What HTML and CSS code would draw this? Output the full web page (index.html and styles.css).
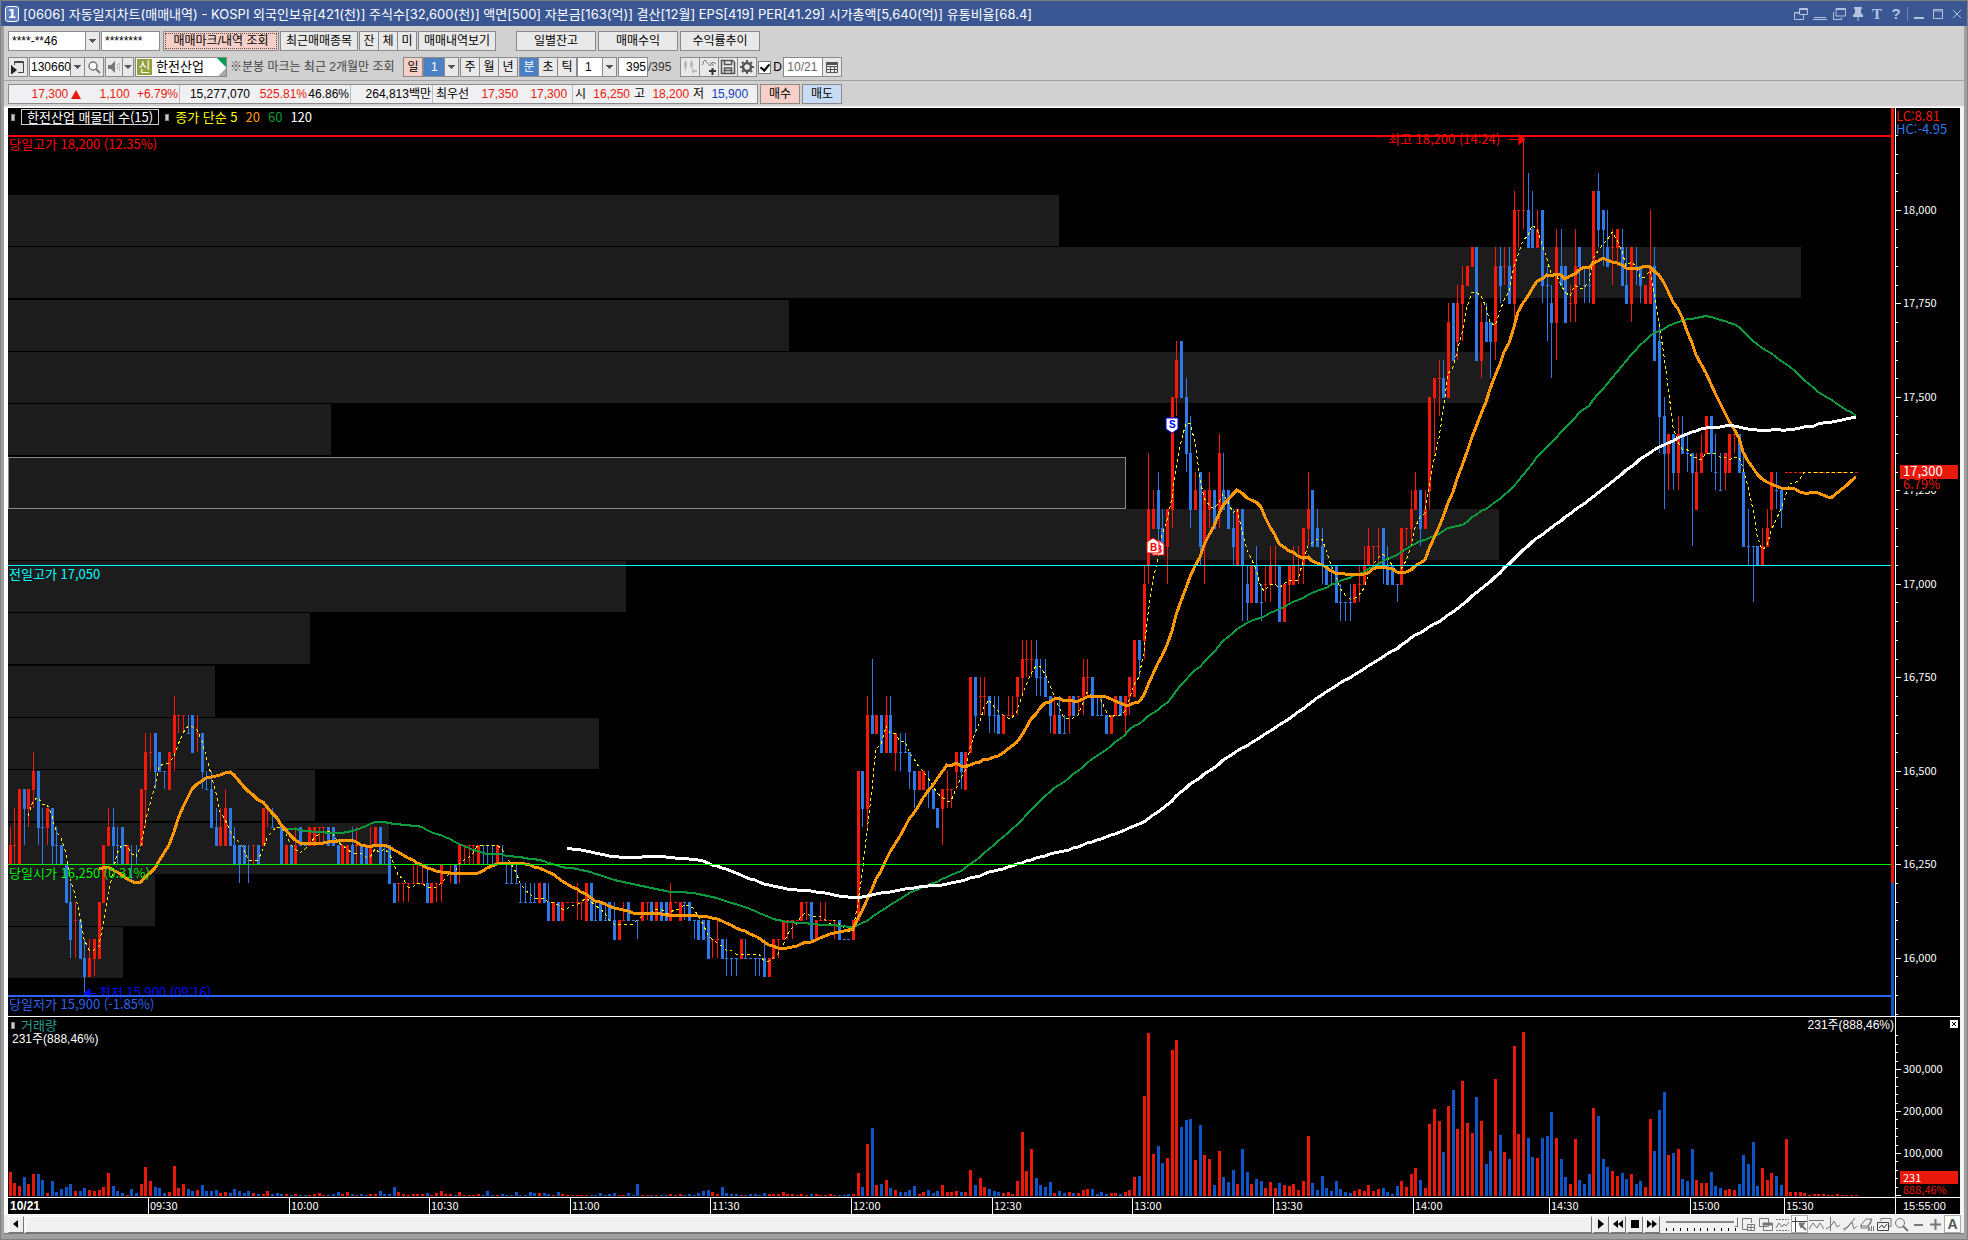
FILE: index.html
```html
<!DOCTYPE html>
<html lang="ko">
<head>
<meta charset="utf-8">
<title>[0606] 자동일지차트(매매내역)</title>
<link rel="stylesheet" href="styles.css">
</head>
<body>
<div class="window">
  <header class="titlebar">
    <span class="badge">1</span>
    <h1 class="title">[0606] 자동일지차트(매매내역) - KOSPI 외국인보유[421(천)] 주식수[32,600(천)] 액면[500] 자본금[163(억)] 결산[12월] EPS[419] PER[41.29] 시가총액[5,640(억)] 유통비율[68.4]</h1>
    <div class="winbtns">
      <button aria-label="분리"><svg width="14" height="12"><path d="M5.5 .5h8v6h-8zM5 1.5h9M9.500 7v4.500h-9v-7h4.500M0 5h5" fill="none" stroke="currentColor"/></svg></button>
      <button aria-label="접기"><svg width="14" height="12"><path d="M1 9.500h12M0 11.500h14" stroke="currentColor"/></svg></button>
      <button aria-label="겹치기"><svg width="14" height="12"><path d="M4 .5h9.500v7.500h-9.500zM4 1.500h9M1.500 4v7.500h8v-2" fill="none" stroke="currentColor"/></svg></button>
      <button aria-label="고정"><svg width="12" height="14"><path d="M2 0h8v2h-1v4l2 2v2H1V8l2-2V2H2zM5.500 10h1v4h-1z" fill="currentColor"/></svg></button>
      <button aria-label="글꼴"><b class="serif">T</b></button>
      <button aria-label="도움말"><b>?</b></button>
      <i class="vline"></i>
      <button aria-label="최소화"><svg width="12" height="12"><path d="M1 9h10v2H1z" fill="currentColor"/></svg></button>
      <button aria-label="최대화"><svg width="12" height="12"><path d="M1.500 1.500h9v9h-9zM1 3h10" fill="none" stroke="currentColor"/></svg></button>
      <button aria-label="닫기"><svg width="12" height="12"><path d="M2 2l8 8M10 2l-8 8" stroke="currentColor"/></svg></button>
    </div>
  </header>

  <section class="toolbars">
    <div class="bar">
      <select class="box w92" aria-label="계좌번호"><option>****-**46</option></select>
      <input class="box w59 pw" aria-label="비밀번호" value="********">
      <button class="btn pink focus w116">매매마크/내역 조회</button>
      <button class="btn w78">최근매매종목</button>
      <span class="group"><button class="btn w20">잔</button><button class="btn w20">체</button><button class="btn w20">미</button></span>
      <button class="btn w78">매매내역보기</button>
      <span class="group wide">
        <button class="btn w80">일별잔고</button>
        <button class="btn w80">매매수익</button>
        <button class="btn w80">수익률추이</button>
      </span>
    </div>
    <div class="bar second">
      <button class="btn w20" aria-label="목록"><svg width="14" height="14"><path d="M3.500 5V1.500h9v11H7M3 2.500h10" fill="none" stroke="#444"/><path d="M1 6l5 4-5 4zM0 5h1v9H0z" fill="#222"/></svg></button>
      <span class="group"><select class="box code w56" aria-label="종목코드"><option>130660</option></select><button class="btn w20" aria-label="검색"><svg width="14" height="14"><circle cx="6" cy="6" r="4" fill="#fff" stroke="#777" stroke-width="1.500"/><path d="M9 9l4 4" stroke="#777" stroke-width="2"/></svg></button></span>
      <span class="group"><button class="btn w18" aria-label="소리"><svg width="14" height="14"><path d="M1 5h3l4-4v12l-4-4H1z" fill="#777"/><path d="M10 5h1M10 8h1M12 4h1M12 7h1M12 10h1" stroke="#777"/></svg></button><button class="btn w12" aria-label="소리 설정"><i class="tri"></i></button></span>
      <span class="box stock w92"><i class="sin">신</i><b>한전산업</b></span>
      <span class="note">※분봉 마크는 최근 2개월만 조회</span>
      <span class="group"><button class="btn pink w20">일</button><select class="box blue w36" aria-label="일 주기"><option>1</option></select></span>
      <span class="group"><button class="btn w20">주</button><button class="btn w20">월</button><button class="btn w20">년</button></span>
      <span class="group"><button class="btn blue w20">분</button><button class="btn w20">초</button><button class="btn w20">틱</button><select class="box w40" aria-label="분 주기"><option>1</option></select></span>
      <span class="group count"><input class="box w30 num" aria-label="봉 개수" value="395"><span>/395</span></span>
      <span class="group">
        <button class="btn w20" aria-label="이전 봉"><svg width="16" height="16"><path d="M3.500 1v11M9.500 1v9" stroke="#bbb"/><path d="M2 3h3v6H2zM8 3h3v5H8zM9 12l3-3v2h3v2h-3v2z" fill="#bbb"/></svg></button><button class="btn w20" aria-label="지표 추가"><svg width="16" height="16"><path d="M1 4l3-3 5 6 3-4 3 2M1 6l2-2M9 3l4 4" fill="none" stroke="#777"/><path d="M8 12h7M11.500 9v7" stroke="#333" stroke-width="2"/></svg></button><button class="btn w20" aria-label="저장"><svg width="16" height="16"><path d="M1.500 1.500h11l2 2v11h-13zM4.500 1.500v4h7v-4M4.500 14v-5h7v5M5 11.500h6" fill="none" stroke="#555" stroke-width="1.500"/></svg></button><button class="btn w20" aria-label="설정"><svg width="16" height="16"><circle cx="8" cy="8" r="4" fill="none" stroke="#555" stroke-width="2.500"/><path d="M8 1v2M8 13v2M1 8h2M13 8h2M3 3l1.500 1.500M11.500 11.500L13 13M3 13l1.500-1.500M11.500 4.500L13 3" stroke="#555" stroke-width="2"/></svg></button>
      </span>
      <label class="chk"><input type="checkbox" checked>D</label>
      <span class="group"><input class="box w40 date" aria-label="날짜" value="10/21"><button class="btn w20" aria-label="달력"><svg width="12" height="12"><path d="M.5 1.500h11v10H.5zM0 5.500h12M0 8.500h12M4.500 5v6M8.500 5v6" fill="none" stroke="#555"/><path d="M0 1h12v3H0z" fill="#555"/></svg></button></span>
    </div>
    <div class="bar quote">
      <div class="quotes box">
        <span class="cell c1 red"><b class="n60">17,300</b><i class="up"></i><b class="n48">1,100</b><b class="n48">+6.79%</b></span>
        <span class="cell c1"><b class="n70">15,277,070</b><b class="n58 red">525.81%</b><b class="n41">46.86%</b></span>
        <span class="cell c2"><b>264,813백만</b></span>
        <span class="cell c3"><b>최우선</b><b class="n48 red">17,350</b><b class="n48 red">17,300</b></span>
        <span class="cell c4">시<b class="n40 red">16,250</b><em>고</em><b class="n40 red">18,200</b><em>저</em><b class="n40 navy">15,900</b></span>
      </div>
      <button class="btn pink w40">매수</button>
      <button class="btn sky w40">매도</button>
    </div>
  </section>

  <main class="chart">
    <div class="panel price">
      <svg id="price"></svg>
      <div class="legend"><i class="dot"></i><span class="sel">한전산업 매물대 수(15)</span><i class="dot"></i><span class="ma"><span>종가 단순 5</span><span class="o">20</span><span class="g">60</span><span class="w">120</span></span></div>
    </div>
    <div class="axis"><svg id="priceAxis"></svg></div>
    <div class="panel vol">
      <svg id="vol"></svg>
      <div class="vlegend"><i class="dot"></i><span>거래량</span></div>
      <div class="vnow">231주(888,46%)</div>
      <div class="vright">231주(888,46%)</div>
    </div>
    <div class="axis vol"><svg id="volAxis"></svg><button class="close" aria-label="거래량 닫기"><svg width="8" height="8"><path d="M2 2l4 4M6 2l-4 4" stroke="#000"/></svg></button></div>
    <div class="panel time"><svg id="time"></svg></div>
    <div class="axis time"><span>15:55:00</span></div>
  </main>

  <footer class="bottom">
    <button class="sb" aria-label="왼쪽으로"><svg width="6" height="8"><path d="M5 0v8L0 4z"/></svg></button>
    <div class="track"></div>
    <button class="sb" aria-label="재생"><svg width="6" height="10"><path d="M0 0v10l6-5z"/></svg></button>
    <button class="sb" aria-label="뒤로"><svg width="10" height="8"><path d="M5 0v8L0 4zM10 0v8L5 4z"/></svg></button>
    <button class="sb" aria-label="정지"><svg width="8" height="8"><path d="M0 0h8v8H0z"/></svg></button>
    <button class="sb" aria-label="앞으로"><svg width="10" height="8"><path d="M0 0v8l5-4zM5 0v8l5-4z"/></svg></button>
    <div class="speed"><input type="range" min="0" max="10" value="10" aria-label="속도"><div class="ticks"><i></i><i></i><i></i><i></i><i></i><i></i><i></i><i></i><i></i><i></i><i></i></div></div>
    <div class="tools">
      <button aria-label="창 추가"><svg width="15" height="15"><path d="M6 12.500H1.500v-11h9V6M6.500 7.500h7v6h-7zM6.500 10.500h7M10 8v6"/></svg></button>
      <button aria-label="겹쳐보기"><svg width="15" height="15"><path d="M1.500 1.500h9v8h-9zM5.500 6.500h9v7h-9z"/><path d="M5 6h9v2H5z" fill="#777"/></svg></button>
      <button aria-label="영역"><svg width="15" height="15"><path d="M1 2.500h13M1 13.500h13" stroke-dasharray="2 1"/><path d="M1 11l3-5 3 4 2-3 2 2 3-4"/></svg></button>
      <button class="on" aria-label="십자선"><svg width="15" height="15"><path d="M0 4.500h15M3.500 0v15" stroke="#444"/><path d="M7 6h6L9 11z" fill="#777"/><path d="M9 8l5 5" stroke-width="2"/></svg></button>
      <button aria-label="수평선"><svg width="15" height="15"><path d="M0 3.500h15M0 12l4-6 4 5 3-5 4 6"/></svg></button>
      <button aria-label="수직선"><svg width="15" height="15"><path d="M4.500 0v14M0 12l5-3 3-5 3 6 3-2"/></svg></button>
      <button aria-label="추세선"><svg width="15" height="15"><path d="M1 14L12 1M0 12l5-2 4-5 2 7 3-3" /></svg></button>
      <button aria-label="모두 지우기"><svg width="15" height="15"><path d="M1 8l5-6h6l-4 7H1zM1 8v3h6l4-5V2M11.500 9v5M13.500 9v5M8 14l1-4 1 4"/></svg></button>
      <button aria-label="차트 복사"><svg width="15" height="15"><path d="M4 4V1.500h10v8h-2"/><path d="M.5 5.500h11v8H.5zM2 11l3-3 2 3 3-4" stroke="#444"/></svg></button>
      <button aria-label="확대"><svg width="15" height="15"><circle cx="6" cy="6" r="4.500"/><path d="M9 9l5 5" stroke-width="2"/></svg></button>
      <button aria-label="축소"><svg width="15" height="15"><path d="M3 8h9" stroke-width="2"/></svg></button>
      <button aria-label="늘리기"><svg width="15" height="15"><path d="M2 7.500h11M7.500 2v11" stroke-width="2"/></svg></button>
      <button class="on" aria-label="자동"><b>A</b></button>
    </div>
  </footer>
</div>
<script src="chart.js"></script>
</body>
</html>
```
FILE: styles.css
```css
* { box-sizing: border-box; }
body {
  margin: 0;
  font: 12px/16px "Liberation Sans", "Noto Sans CJK KR", sans-serif;
  color: #000;
  background: #a0a0a0;
}
b, em, i { font-weight: normal; font-style: normal; }
button, input, select { font: inherit; color: inherit; margin: 0; padding: 0; border-radius: 0; }
.window {
  display: flex;
  flex-direction: column;
  min-height: 100vh;
  border: 1px solid #808080;
}

/* title bar */
.titlebar {
  display: flex;
  align-items: center;
  gap: 4px;
  height: 25px;
  padding: 0 2px 0 4px;
  background: #3a5793;
  color: #fff;
}
.badge {
  width: 14px;
  height: 16px;
  border: 1px solid #fff;
  border-radius: 3px;
  background: #5f7fc0;
  font: bold 12px/14px "DejaVu Sans", sans-serif;
  text-align: center;
}
.title { flex: 1; margin: 0; font: 13px/24px Inter, "Noto Sans CJK KR", sans-serif; white-space: nowrap; overflow: hidden; }
.winbtns { display: flex; align-items: center; gap: 3px; color: #b4c2e0; }
.winbtns button { display: grid; place-items: center; width: 16px; height: 16px; border: 0; background: none; }
.winbtns b { font-weight: bold; font-size: 15px; }
.winbtns .serif { font-family: "Liberation Serif", serif; }
.vline { width: 1px; height: 14px; background: #7088b8; }

/* toolbars */
.toolbars { margin: 0 3px; background: #d1d1d1; padding-top: 5px; }
.bar { display: flex; gap: 1px; height: 26px; padding: 0 4px; }
.second { height: 23px; }
.group { display: flex; }
.group .btn + .btn, .group .box + .btn { margin-left: -1px; }
.wide { margin-left: 19px; gap: 3px; }
.btn {
  display: grid;
  place-items: center;
  height: 20px;
  border: 1px solid #8a8a8a;
  background: #e9e9e9;
  white-space: nowrap;
}
.box {
  height: 20px;
  border: 1px solid #8a8a8a;
  background-color: #fff;
  padding: 0 3px;
}
select.box {
  appearance: none;
  background-image: linear-gradient(#555, #555), linear-gradient(#555, #555), linear-gradient(#555, #555), linear-gradient(#555, #555), linear-gradient(#8a8a8a, #8a8a8a), linear-gradient(#e9e9e9, #e9e9e9);
  background-size: 7px 1px, 5px 1px, 3px 1px, 1px 1px, 1px 100%, 13px 100%;
  background-position: right 3px top 7px, right 4px top 8px, right 5px top 9px, right 6px top 10px, right 13px top, right top;
  background-repeat: no-repeat;
}
select.code { padding: 0 0 0 1px; }
.pink { background: #f5cfc8; }
.sky { background: #c8ddf5; }
.blue { background-color: #4a80c4; color: #fff; }
.focus { outline: 1px dotted #555; outline-offset: -3px; }
.w12 { width: 12px; } .w18 { width: 18px; } .w20 { width: 20px; } .w30 { width: 30px; }
.w36 { width: 36px; } .w40 { width: 40px; } .w56 { width: 56px; } .w59 { width: 59px; }
.w78 { width: 78px; } .w80 { width: 80px; } .w92 { width: 92px; } .w116 { width: 116px; }
.pw { margin-right: 2px; }
.num { text-align: right; padding: 0 1px; color: #000; }
select.blue, .w40 { padding-left: 7px; }
.btn.w40 { padding: 0; }
.date { padding-left: 3px; color: #666; }
.tri { border: 4px solid transparent; border-top-color: #555; border-bottom: 0; }
.stock {
  display: flex;
  gap: 3px;
  padding: 0;
  font-size: 13px;
  line-height: 18px;
  background: linear-gradient(225deg, #00a050 6px, transparent 7px), linear-gradient(315deg, #aaa 5px, transparent 6px), #fff;
}
.sin { width: 15px; margin: 1px; background: #94a03c; color: #fff; line-height: 16px; text-align: center; }
.note { width: 174px; color: #444; line-height: 20px; padding-left: 2px; white-space: nowrap; }
.count { margin-right: 8px; line-height: 20px; color: #333; }
.chk { display: flex; align-items: center; gap: 2px; height: 20px; width: 24px; }
.chk input { appearance: none; position: relative; width: 13px; height: 13px; border: 1px solid #777; background: #fff; }
.chk input:checked::after { content: ""; position: absolute; left: 3px; top: 0; width: 4px; height: 7px; border: solid #000; border-width: 0 2px 2px 0; transform: rotate(40deg); }
.quote { height: 27px; border-top: 1px solid #a0a0a0; padding-top: 3px; gap: 2px; border-bottom: 1px solid #eee; }
.quotes { display: flex; width: 750px; padding: 0; background: #f0f0f2; line-height: 18px; }
.cell { display: flex; border-right: 1px solid #bbb; padding-right: 1px; white-space: nowrap; }
.cell b { text-align: right; }
.cell:last-child { border: 0; }
.c1 { width: 171px; }
.c2 { width: 82px; justify-content: flex-end; }
.c3 { width: 140px; padding-left: 3px; }
.c4 { padding-left: 2px; gap: 4px; }
.n40 { width: 40px; } .n41 { width: 42px; } .n48 { width: 49px; } .n58 { width: 57px; } .n60 { width: 60px; } .n70 { width: 70px; }
.up { margin: 5px 0 0 3px; border: 5px solid transparent; border-top: 0; border-bottom: 9px solid #e8180a; height: 0; }
.red { color: #e8180a; }
.navy { color: #1040c0; }

/* chart */
.chart {
  flex: 1;
  display: grid;
  grid-template-columns: minmax(0, 1fr) 65px;
  grid-template-rows: minmax(400px, 1fr) 181px 17px;
  margin: 0 3px;
  border: solid #fff;
  border-width: 1px 4px 1px 4px;
  border-right-color: #f4f4f4;
  background: #000;
  color: #fff;
}
.panel, .axis { position: relative; min-width: 0; overflow: hidden; }
.panel > svg, .axis > svg { position: absolute; inset: 0; width: 100%; height: 100%; }
.axis { border-left: 1px solid #fff; }
.vol, .time { border-top: 1px solid #fff; }
svg text { font: 11px "Noto Sans CJK KR", sans-serif; }
svg text.lab { font-size: 13px; }
svg text.mark { font: bold 10px "Liberation Sans", sans-serif; }
svg text.day { font: bold 12px "Liberation Sans", sans-serif; }
.legend, .vlegend {
  position: absolute;
  left: 3px;
  top: 1px;
  display: flex;
  align-items: center;
  gap: 6px;
  font: 13px/14px "Noto Sans CJK KR", sans-serif;
}
.dot { width: 4px; height: 7px; background: #c8c8c8; border: 1px solid #888; }
.sel { border: 1px solid #ccc; padding: 0 5px; }
.ma { display: flex; gap: 8px; color: #ff0; }
.ma .o { color: #ff9800; } .ma .g { color: #0c9b3c; } .ma .w { color: #fff; }
.vlegend { color: #2a9d90; }
.vnow { position: absolute; left: 4px; top: 14px; }
.vright { position: absolute; right: 1px; top: 0; }
.close { position: absolute; right: 2px; top: 3px; width: 8px; height: 8px; border: 0; background: #fff; display: grid; }
.axis.time { padding-left: 7px; font-size: 11px; }

/* bottom bar */
.bottom {
  display: flex;
  align-items: center;
  gap: 1px;
  height: 19px;
  margin: 0 3px 5px;
  padding: 0 3px 0 4px;
  background: #f0f0f0;
  border-bottom: 1px solid #777;
}
.sb { display: grid; place-items: center; width: 16px; height: 17px; border: 1px solid; border-color: #fff #777 #777 #fff; background: #eee; }
.track { flex: 1; height: 17px; border: 1px solid; border-color: #fff #777 #777 #fff; }
.speed { width: 72px; margin: 0 1px 0 5px; display: flex; flex-direction: column; gap: 1px; }
.speed input { appearance: none; width: 72px; height: 10px; background: linear-gradient(#888, #888) no-repeat 0 4px / 100% 2px; }
.speed input::-webkit-slider-thumb { appearance: none; width: 4px; height: 10px; border: 1px solid; border-color: #fff #777 #777 #fff; background: #eee; }
.ticks { display: flex; justify-content: space-between; width: 70px; }
.ticks i { width: 1px; height: 3px; background: #000; }
.tools { display: flex; }
.tools button { display: grid; place-items: center; width: 17px; height: 18px; border: 0; background: none; color: #555; }
.tools .on { background: #fff; border: 1px solid #aaa; }
.tools svg { fill: none; stroke: #777; }
.tools b { font: bold 14px "Liberation Sans", sans-serif; }
```
FILE: chart.js
```js
// Candles: colour, then high, body top, body bottom, low, in steps of 50 won above 15,900.
const CANDLES = `
r9,8,7,7 r10,8,8,7 r11,11,7,7 b11,11,10,8 r11,11,10,9 r13,12,11,10 b12,12,9,8 b10,9,9,7 r10,10,9,8 b10,10,8,7
b9,8,8,7 b8,8,7,7 b7,7,5,5 b6,5,3,2 r5,4,4,2 b4,4,2,2 b3,2,1,0 r3,2,1,1 r3,3,2,1 r5,5,2,2
r8,8,5,5 r10,9,8,8 b10,9,8,7 b9,8,8,7 b9,9,7,7 r8,8,7,7 b8,7,7,6 b8,7,7,7 r11,11,8,8 r14,13,11,9
r14,13,13,12 b14,14,12,11 b13,13,12,12 b12,12,12,11 r13,13,11,11 r16,15,13,12 r15,15,15,14 r15,15,15,14 b15,14,14,14 b15,15,13,13
r15,14,14,13 b14,14,12,11 b12,11,11,11 b12,11,9,9 b10,9,8,8 r10,9,8,8 r11,10,8,8 b10,10,8,8 b9,8,7,7 b8,8,7,6
b8,8,7,7 b8,7,7,6 r8,8,8,7 b8,8,7,7 r10,10,8,8 r10,10,10,9 b10,9,9,9 b9,9,9,9 b9,9,7,7 r8,8,7,7
b8,8,7,7 r9,8,7,7 b9,9,8,8 b8,8,8,8 r9,9,8,8 r9,9,8,8 r9,9,9,8 r9,9,9,8 b9,9,8,8 b9,9,8,8
b8,8,7,7 r8,8,7,7 r8,8,7,7 b9,8,7,7 r9,8,8,7 b8,8,7,7 b8,8,7,7 r9,8,7,7 r9,9,8,8 b9,9,7,7
b8,8,8,7 b8,8,6,6 b6,6,5,5 r6,6,6,5 r6,6,6,5 r6,6,6,5 r7,6,6,6 r7,6,6,6 r7,6,6,6 b7,6,5,5
r6,6,5,5 r6,6,6,5 r7,7,6,5 r7,7,7,7 r7,7,7,6 b7,7,6,6 r8,8,7,6 r8,8,8,7 r8,8,8,7 r8,8,8,7
r8,8,7,7 b8,8,8,7 b8,8,8,7 b8,8,8,7 r8,8,7,7 b8,7,7,7 b7,6,6,6 b7,6,6,6 b7,6,6,6 b6,5,5,5
b6,5,5,5 b6,5,5,5 b6,5,5,5 r6,6,5,5 b6,6,5,5 b6,5,4,4 r5,5,4,4 b5,5,4,4 r5,5,4,4 r5,5,5,5
r5,5,5,5 r6,5,5,4 r5,5,5,4 r6,6,4,4 b6,6,4,4 b5,4,4,4 b5,5,4,4 b5,4,4,4 b5,5,4,4 b5,4,3,3
r4,4,3,3 r5,4,4,4 b5,5,4,4 b4,4,4,4 b4,4,4,3 r5,5,4,4 r5,5,5,4 b5,5,4,4 r5,5,4,4 b5,5,4,4
b5,5,4,4 r6,5,4,4 r5,5,5,5 r5,5,4,4 b5,5,5,4 b5,5,4,4 b4,4,4,3 b4,4,3,3 b4,4,3,3 b4,4,2,2
r3,3,3,2 r4,3,3,2 b3,3,2,2 b3,2,2,1 b2,2,2,1 b2,2,2,1 r3,3,2,2 b3,2,2,2 b2,2,2,2 b2,2,2,1
b2,2,2,1 b3,2,1,1 r2,2,1,1 r3,3,2,2 r3,3,3,2 r4,4,3,3 r4,4,4,3 r4,4,4,3 r4,4,4,4 r5,5,4,4
r5,5,5,4 b5,5,3,3 r4,4,3,3 r5,4,4,4 r5,4,4,4 r4,4,4,4 r4,4,4,3 b4,4,3,3 b3,3,3,3 b3,3,3,3
r4,4,3,3 r12,12,4,4 b12,12,10,9 r16,15,10,9 b18,15,14,14 r15,15,14,14 b15,15,13,13 r16,15,13,13 b16,15,13,13 r14,14,13,12
b14,13,13,12 b14,13,13,13 b13,13,12,11 b12,12,11,10 r12,12,11,11 r12,12,11,11 b12,11,11,10 b11,11,10,10 b10,10,9,9 r11,11,10,8
r12,11,11,10 r11,11,11,10 r13,13,12,11 b13,13,12,11 r13,13,11,11 r17,17,13,13 b17,17,15,14 r17,16,16,15 r17,16,16,15 b16,16,15,14
b16,15,15,14 b16,15,14,14 r15,15,14,14 r16,15,15,15 r16,15,15,15 r17,17,16,15 r19,18,17,16 r19,18,18,17 r19,18,18,17 b19,18,17,16
b18,17,17,16 b18,17,16,16 b16,16,15,14 r16,15,14,14 b16,15,14,14 b15,14,14,14 r16,16,15,14 b16,16,15,15 r16,16,16,15 r18,17,16,15
r18,17,17,16 b17,17,15,15 b16,15,15,15 b16,15,15,15 b15,15,14,14 r15,15,14,14 r16,16,15,15 b16,16,15,15 r16,16,15,14 r17,17,16,15
r19,19,16,16 b19,19,18,17 r23,22,19,18 r29,26,23,22 r27,26,25,25 b28,27,25,24 b26,25,24,24 r26,26,24,22 r32,32,26,25 r35,34,32,31
b35,35,32,32 b33,32,29,28 b31,29,26,25 r28,27,26,26 b28,28,24,23 r27,27,24,22 r28,27,26,25 b27,27,25,25 r30,29,26,25 b29,27,26,26
b27,27,25,25 b26,25,24,23 r26,26,23,23 b26,26,23,20 b23,22,21,20 r23,23,21,21 b24,23,21,21 b22,21,21,20 r23,22,22,21 r24,23,22,21
r24,23,23,22 b23,23,20,20 r22,22,20,20 r23,23,22,21 r24,23,22,22 r24,23,23,22 r25,25,23,22 r28,26,25,24 b27,27,24,24 b26,25,24,24
b25,24,23,22 b23,23,22,22 b23,22,22,22 b23,23,21,21 b22,21,21,20 b21,21,21,20 b22,21,21,20 r22,22,21,21 r23,22,22,21 r24,23,22,22
r25,24,23,23 r24,24,24,23 r25,24,24,23 b25,25,23,22 b24,23,22,22 b23,23,22,22 b22,22,22,21 r25,25,22,22 r25,25,25,24 r27,26,25,24
r28,27,26,26 b27,27,25,24 r27,26,25,25 r32,32,27,26 r33,33,32,29 r34,33,33,31 b34,33,32,32 r37,36,32,32 b37,37,34,34 r38,37,35,34
r39,38,37,35 r39,39,38,38 r40,40,39,39 b40,40,34,34 r37,36,34,33 b37,36,35,35 b36,36,35,33 r40,39,35,34 b40,39,38,37 r40,39,39,38
b40,39,37,37 r43,42,37,36 r42,42,42,40 r46,42,42,41 b44,42,40,40 b43,41,40,40 r42,41,40,40 b42,42,38,37 b39,38,38,35 b38,37,36,33
r41,40,36,34 b41,39,38,38 b39,39,36,36 r38,37,37,36 r41,39,37,36 b40,40,39,38 b39,38,38,37 b39,38,38,37 r43,43,37,37 b44,43,41,40
b42,42,41,39 b42,40,39,39 r41,40,40,38 r41,41,40,39 b41,40,38,38 b40,38,37,37 r40,40,37,36 b40,39,39,38 b39,39,38,37 r38,38,37,37
r42,39,37,37 b40,39,34,34 b36,35,31,29 b32,31,29,26 r30,30,29,27 b30,30,28,27 r31,30,28,27 b31,30,29,29 b30,29,29,28 b29,29,28,24
r29,28,26,26 r30,29,28,28 r31,31,29,29 b31,31,29,28 b30,28,28,27 b29,27,27,27 r29,29,28,27 r30,30,28,28 r30,30,30,29 b30,30,28,28
b29,28,24,24 b26,24,24,23 b24,24,24,21 b24,24,23,23 r25,24,23,23 r26,25,24,24 r28,28,26,25 b28,27,27,26 b27,27,26,25`
  .trim().split(/\s+/).map(s => ({ c: s[0], v: s.slice(1).split(',').map(Number) }));
while (CANDLES.length < 395) CANDLES.push({ c: 'r', v: [28, 28, 28, 28] });

// Volume per minute, in units of 2,400 shares.
const VOLUME = `
24 13 10 19 12 22 22 16 3 15 4 7 9 12 5 5 8 6 5 6 9 23 10 5 3 1 7 3 12 29 15 9 8 3 4 30 8 12 7 5
6 11 5 5 6 3 4 3 7 5 3 5 3 2 2 5 2 3 2 2 1 2 1 1 1 2 3 1 1 2 4 2 4 2 1 2 1 2 2 5
2 2 9 4 2 1 2 2 2 3 1 3 5 2 2 1 4 1 1 1 2 1 5 1 1 2 1 1 4 1 1 4 3 3 3 2 1 4 2 1
1 1 1 1 1 1 3 1 2 3 1 1 3 1 12 1 1 1 1 1 1 2 1 2 1 2 1 3 5 6 4 2 9 3 2 2 1 1 2 2
1 3 2 2 2 4 2 2 1 2 1 2 2 1 1 2 1 1 1 2 2 23 9 52 68 11 12 16 8 6 4 4 6 10 2 4 6 3 5 11
4 4 5 4 4 26 11 18 9 7 5 4 3 4 2 15 64 25 47 18 11 9 14 3 5 3 4 3 3 6 7 7 2 4 2 3 3 2 4 6
19 20 100 163 42 50 33 38 146 156 69 76 77 36 71 41 37 11 45 19 14 26 12 47 24 12 17 15 8 14 8 13 11 10 12 6 15 60 13 6
20 8 5 15 7 4 3 5 7 5 11 5 7 8 4 2 10 15 9 22 28 16 8 72 87 75 44 90 106 67 115 73 63 99 75 32 45 117 61 44
37 150 62 164 58 39 38 58 60 84 58 37 19 12 57 16 12 22 88 80 37 29 25 20 23 17 22 12 15 9 77 45 86 104 41 43 47 17 15 47
16 13 13 24 10 8 6 7 6 12 41 32 54 10 28 16 23 20 11 57 4 4 4 3 1 2 2 2 1 1 2 1 1 1 1`
  .trim().split(/\s+/).map(Number);

// Volume-by-price rows, top to bottom, as a share of the plot width.
const PROFILE = [1051, 1793, 781, 1482, 323, 1117, 1491, 618, 302, 207, 591, 307, 381, 147, 115].map(v => v / 1887);

const RED = '#f5190c', BLUE = '#2f78e8';
const rect = (x, y, w, h, f, extra = '') => `<rect x="${x}" y="${y}" width="${w}" height="${h}" fill="${f}" shape-rendering="crispEdges" ${extra}/>`;
const text = (x, y, s, f, cls = '') => `<text x="${x}" y="${y}" fill="${f}" class="${cls}">${s}</text>`;
const el = id => document.getElementById(id);

function average(n) {
  const close = CANDLES.map(k => k.c === 'r' ? k.v[1] : k.v[2]);
  const out = [];
  for (let i = n - 1; i < close.length; i++) {
    let sum = 0;
    for (let j = 0; j < n; j++) sum += close[i - j];
    out.push([i, sum / n]);
  }
  return out;
}

function draw() {
  const W = el('price').clientWidth, H = el('price').clientHeight, VH = el('vol').clientHeight;
  const slot = (W - 36) / 395;
  const X = i => Math.floor(slot * i) + 1;
  const step = H * 18.69 / 908;
  const Y = l => Math.round(H * 102 / 908 + (42 - l) * step);

  let s = '';
  PROFILE.forEach((p, k) => {
    const y = Math.round(H * (87 + 52.3 * k) / 908);
    s += k === 5 ? rect(0, y, Math.round(p * W), 51, '#1c1c1c', 'stroke="#888"') : rect(0, y, Math.round(p * W), Math.round(H * 51 / 908), '#1c1c1c');
  });
  CANDLES.forEach((k, i) => {
    const [hi, top, bot, lo] = k.v, f = k.c === 'r' ? RED : BLUE;
    if (hi > lo) s += rect(X(i) + 1, Y(hi), 1, Y(lo) - Y(hi), f);
    s += rect(X(i), Y(top), 3, top === bot ? 1 : Y(bot) - Y(top) + 1, f);
  });
  [[5, '#ff0', 1, 'stroke-dasharray="3 3"'], [60, '#0c9b3c', 2, ''], [20, '#ff9800', 3, ''], [120, '#fff', 3, '']].forEach(([n, c, w, d]) => {
    const pts = average(n).map(([i, v]) => `${X(i) + 1},${Y(v)}`).join(' ');
    s += `<polyline points="${pts}" fill="none" stroke="${c}" stroke-width="${w}" shape-rendering="crispEdges" ${d}/>`;
  });
  s += text(1380 / 1887 * W, Y(46) + 9, '최고 18,200 (14:24)', '#f00', 'lab');
  s += `<path d="M${X(323) - 13} ${Y(46) + 4}.500h10m0-5v10l6-5z" stroke="#f00" fill="#f00"/>`;
  s += text(X(16) + 16, Y(0) + 2, '최저 15,900 (09:16)', '#00f', 'lab');
  s += `<path d="M${X(16) + 13} ${Y(0) - 2}.500h-6m0-5v10l-6-5z" stroke="#00f" fill="#00f"/>`;
  [[46, 2, '#f00', '당일고가 18,200 (12.35%)'], [23, 1, '#0ff', '전일고가 17,050'], [7, 1, '#0e0', '당일시가 16,250 (0.31%)'], [0, 2, '#2f62f0', '당일저가 15,900 (-1.85%)']].forEach(([l, w, c, t]) => {
    s += rect(0, Y(l), W - 4, w, c) + text(1, Y(l) + 14, t, c, 'lab');
  });
  const shield = (x, y, c, t, up) => {
    const d = up ? `M${x - 6} ${y + 15}V${y + 4}L${x} ${y}L${x + 6} ${y + 4}V${y + 15}z` : `M${x - 6} ${y}V${y + 11}L${x} ${y + 15}L${x + 6} ${y + 11}V${y}z`;
    return `<path d="${d}" fill="#fff" stroke="${c}"/>` + text(x - 3, y + (up ? 13 : 10), t, c, 'mark');
  };
  s += shield(X(248) + 1, Y(31) + 2, '#00f', 'S', false);
  s += shield(X(245) + 1, Y(25) + 12, '#f00', 'B', true) + shield(X(244) + 1, Y(25) + 10, '#f00', 'B', true);
  s += rect(W - 4, 0, 3, Y(6), '#e8180a') + rect(W - 4, Y(6), 3, H - Y(6), '#1055c8');
  el('price').innerHTML = s;

  s = '';
  for (let l = -1; l <= 46; l++) {
    const major = (l - 2) % 5 === 0;
    s += rect(0, Y(l), major ? 5 : 2, 1, '#fff');
    if (major) s += text(7, Y(l) + 4, (15900 + l * 50).toLocaleString('en-US'), '#fff');
  }
  s += text(0, 13, 'LC:8.81', '#f5190c', 'lab') + text(0, 26, 'HC:-4.95', BLUE, 'lab');
  s += rect(4, Y(28) - 7, 58, 26, '#000') + rect(4, Y(28) - 7, 58, 14, '#e8180a');
  s += text(7, Y(28) + 4, '17,300', '#fff', 'lab') + text(7, Y(28) + 17, '6.79%', '#e8180a', 'lab');
  el('priceAxis').innerHTML = s;

  s = '';
  VOLUME.forEach((v, i) => { s += rect(X(i), VH - 1 - v, 3, v, CANDLES[i].c === 'r' ? '#e8180a' : '#1055c8'); });
  el('vol').innerHTML = s;

  s = '';
  for (let k = 0; k <= 19; k++) {
    const y = Math.round(VH - 2 - k * 8.4), major = k % 5 === 0;
    s += rect(0, y, major ? 5 : 2, 1, '#fff');
    if (major && k) s += text(7, y + 4, (k * 20000).toLocaleString('en-US'), '#fff');
  }
  s += rect(4, VH - 26, 58, 13, '#e8180a') + text(7, VH - 15, '231', '#fff') + text(7, VH - 3, '888,46%', '#e8180a');
  el('volAxis').innerHTML = s;

  s = text(2, 12, '10/21', '#fff', 'day');
  [['09:30', 30], ['10:00', 60], ['10:30', 90], ['11:00', 120], ['11:30', 150], ['12:00', 180], ['12:30', 210], ['13:00', 240], ['13:30', 270], ['14:00', 300], ['14:30', 329], ['15:00', 359], ['15:30', 379]].forEach(([t, i]) => {
    s += rect(X(i) - 1, 0, 1, 18, '#fff') + text(X(i) + 1, 12, t, '#fff');
  });
  el('time').innerHTML = s;
}
draw();
window.addEventListener('resize', draw);
```
